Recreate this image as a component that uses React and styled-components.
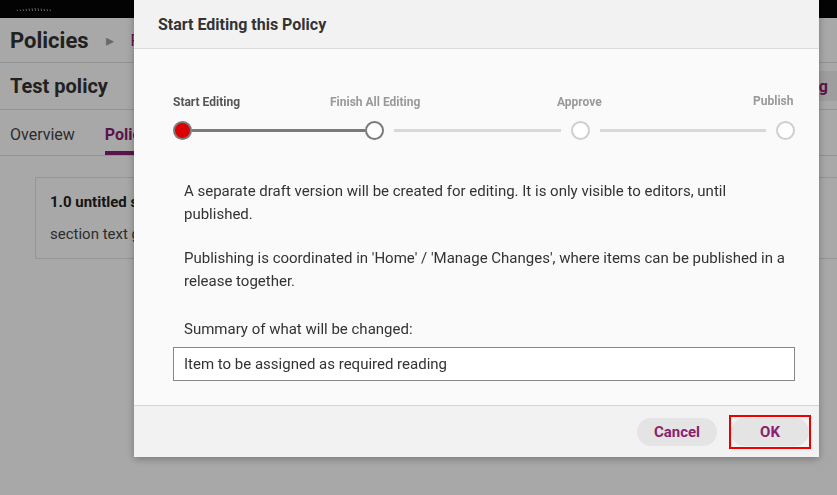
import React from "react";
import styled, { createGlobalStyle } from "styled-components";

const GlobalStyle = createGlobalStyle`
  html, body {
    margin: 0;
    padding: 0;
    background: #ffffff;
    font-family: Roboto, "Liberation Sans", Arial, sans-serif;
    overflow: hidden;
  }
`;

const steps = [
  { label: "Start Editing", state: "current" },
  { label: "Finish All Editing", state: "next" },
  { label: "Approve", state: "todo" },
  { label: "Publish", state: "todo" },
];

export default function App() {
  return (
    <>
      <GlobalStyle />
      <Page>
        <TopBar>
          <Logo viewBox="0 0 40 10">
            {Array.from({ length: 12 }).map((_, i) => (
              <line
                key={i}
                x1={3 + i * 3}
                y1={4 + Math.abs(6 - i) * 0.3}
                x2={3.6 + i * 3}
                y2={7}
                stroke="#bbb"
                strokeWidth="0.8"
              />
            ))}
          </Logo>
        </TopBar>
        <Breadcrumb>
          <Crumb>Policies</Crumb>
          <Chevron>▸</Chevron>
          <CrumbLink>Policies</CrumbLink>
        </Breadcrumb>
        <TitleRow>
          <PageTitle>Test policy</PageTitle>
          <HeaderButton>Start Editing</HeaderButton>
        </TitleRow>
        <Tabs>
          <Tab>Overview</Tab>
          <Tab $active>Policy</Tab>
        </Tabs>
        <Content>
          <Card>
            <CardTitle>1.0 untitled section</CardTitle>
            <CardText>section text goes here</CardText>
          </Card>
        </Content>
      </Page>

      <Overlay>
        <Modal>
          <ModalHeader>Start Editing this Policy</ModalHeader>
          <ModalBody>
            <Stepper>
              <Labels>
                {steps.map((s, i) => (
                  <StepLabel key={s.label} $state={s.state} $index={i}>
                    {s.label}
                  </StepLabel>
                ))}
              </Labels>
              <Track>
                <Dot $state="current" />
                <Line $dark />
                <Dot $state="next" />
                <Line />
                <Dot $state="todo" />
                <Line />
                <Dot $state="todo" />
              </Track>
            </Stepper>
            <Text>
              <p>
                A separate draft version will be created for editing. It is only visible to editors, until
                published.
              </p>
              <p>
                Publishing is coordinated in 'Home' / 'Manage Changes', where items can be published in a
                release together.
              </p>
              <p>Summary of what will be changed:</p>
            </Text>
            <SummaryInput defaultValue="Item to be assigned as required reading" />
          </ModalBody>
          <ModalFooter>
            <PillButton>Cancel</PillButton>
            <Highlight>
              <PillButton $wide>OK</PillButton>
            </Highlight>
          </ModalFooter>
        </Modal>
      </Overlay>
    </>
  );
}

const Page = styled.div`
  width: 837px;
  height: 495px;
  overflow: hidden;
  background: #fff;
  color: #333;
`;

const TopBar = styled.div`
  height: 18px;
  background: #050505;
  display: flex;
  align-items: center;
  padding-left: 14px;
`;

const Logo = styled.svg`
  width: 40px;
  height: 10px;
`;

const Breadcrumb = styled.div`
  height: 44px;
  border-bottom: 1px solid #e0e0e0;
  display: flex;
  align-items: center;
  padding-left: 10px;
  gap: 17px;
`;

const Crumb = styled.span`
  font-size: 22px;
  font-weight: 700;
  color: #333;
`;

const Chevron = styled.span`
  font-size: 16px;
  color: #a0a0a0;
`;

const CrumbLink = styled.span`
  font-size: 16px;
  color: #8b1e6f;
`;

const TitleRow = styled.div`
  height: 46px;
  border-bottom: 1px solid #e0e0e0;
  display: flex;
  align-items: center;
  justify-content: space-between;
  padding-left: 10px;
`;

const PageTitle = styled.h1`
  margin: 0;
  font-size: 20px;
  font-weight: 700;
  color: #333;
`;

const HeaderButton = styled.div`
  height: 30px;
  display: flex;
  align-items: center;
  padding: 0 9px 0 14px;
  background: #f0f0f0;
  color: #8b1e6f;
  font-weight: 700;
  font-size: 16px;
`;

const Tabs = styled.div`
  height: 45px;
  border-bottom: 1px solid #e0e0e0;
  display: flex;
  align-items: stretch;
  padding-left: 10px;
  gap: 30px;
`;

const Tab = styled.div`
  display: flex;
  align-items: center;
  padding-top: 8px;
  font-size: 16px;
  font-weight: ${(p) => (p.$active ? 700 : 400)};
  color: ${(p) => (p.$active ? "#8b1e6f" : "#444")};
  border-bottom: 4px solid ${(p) => (p.$active ? "#8b1e6f" : "transparent")};
`;

const Content = styled.div`
  padding: 21px 0 0 35px;
`;

const Card = styled.div`
  width: 790px;
  height: 66px;
  border: 1px solid #e2e2e2;
  padding: 7px 14px;
  box-sizing: content-box;
`;

const CardTitle = styled.div`
  font-size: 15px;
  font-weight: 700;
  color: #222;
  margin-top: 8px;
`;

const CardText = styled.div`
  font-size: 15px;
  color: #444;
  margin-top: 14px;
`;

const Overlay = styled.div`
  position: fixed;
  inset: 0;
  background: rgba(0, 0, 0, 0.34);
`;

const Modal = styled.div`
  position: absolute;
  left: 134px;
  top: 0;
  width: 685px;
  background: #fafafa;
  box-shadow: 0 2px 8px rgba(0, 0, 0, 0.3);
  display: flex;
  flex-direction: column;
`;

const ModalHeader = styled.div`
  height: 49px;
  box-sizing: border-box;
  padding: 0 24px;
  display: flex;
  align-items: center;
  background: #f2f2f2;
  border-bottom: 1px solid #dcdcdc;
  font-size: 16px;
  font-weight: 700;
  color: #333;
`;

const ModalBody = styled.div`
  padding: 38px 24px 24px 39px;
  height: 356px;
  box-sizing: border-box;
`;

const Stepper = styled.div`
  width: 622px;
`;

const Labels = styled.div`
  position: relative;
  height: 24px;
`;

const labelLeft = ["0px", "157px", "384px", "580px"];
const labelTop = ["8px", "8px", "8px", "7px"];

const StepLabel = styled.span`
  position: absolute;
  left: ${(p) => labelLeft[p.$index]};
  top: ${(p) => labelTop[p.$index]};
  font-size: 12px;
  font-weight: 700;
  color: ${(p) => (p.$state === "current" ? "#555" : "#999")};
  white-space: nowrap;
`;

const Track = styled.div`
  display: flex;
  align-items: center;
  height: 20px;
  margin-top: 9px;
`;

const Dot = styled.div`
  width: 15px;
  height: 15px;
  border-radius: 50%;
  flex: none;
  background: ${(p) => (p.$state === "current" ? "#dd0000" : "#fff")};
  border: 2.5px solid ${(p) => (p.$state === "todo" ? "#cfcfcf" : "#7a7a7a")};
`;

const Line = styled.div`
  flex: ${(p) => (p.$dark ? "0 0 173px" : "1")};
  height: 3px;
  background: ${(p) => (p.$dark ? "#7a7a7a" : "#d8d8d8")};
  margin: ${(p) => (p.$dark ? "0" : "0 10px")};
`;

const Text = styled.div`
  padding: 40px 0 0 11px;
  font-size: 15px;
  line-height: 23px;
  color: #333;

  p {
    margin: 0 0 21px;
  }

  p:last-child {
    margin: 25px 0 0;
  }
`;

const SummaryInput = styled.input`
  display: block;
  width: 622px;
  height: 34px;
  box-sizing: border-box;
  margin-top: 6px;
  border: 1px solid #888;
  background: #fff;
  padding: 0 10px;
  font-family: Roboto, "Liberation Sans", Arial, sans-serif;
  font-size: 15px;
  color: #333;
  outline: none;
`;

const ModalFooter = styled.div`
  height: 52px;
  box-sizing: border-box;
  background: #f2f2f2;
  border-top: 1px solid #d6d6d6;
  display: flex;
  align-items: center;
  justify-content: flex-end;
  gap: 12px;
  padding-right: 8px;
`;

const PillButton = styled.button`
  height: 28px;
  min-width: ${(p) => (p.$wide ? "78px" : "80px")};
  border: none;
  border-radius: 14px;
  background: #e4e4e4;
  color: #8b1e6f;
  font-family: Roboto, "Liberation Sans", Arial, sans-serif;
  font-weight: 700;
  font-size: 15px;
  padding: 0 14px;
`;

const Highlight = styled.div`
  border: 2.5px solid #ee0000;
  padding: 1px 0;
  display: flex;
`;
